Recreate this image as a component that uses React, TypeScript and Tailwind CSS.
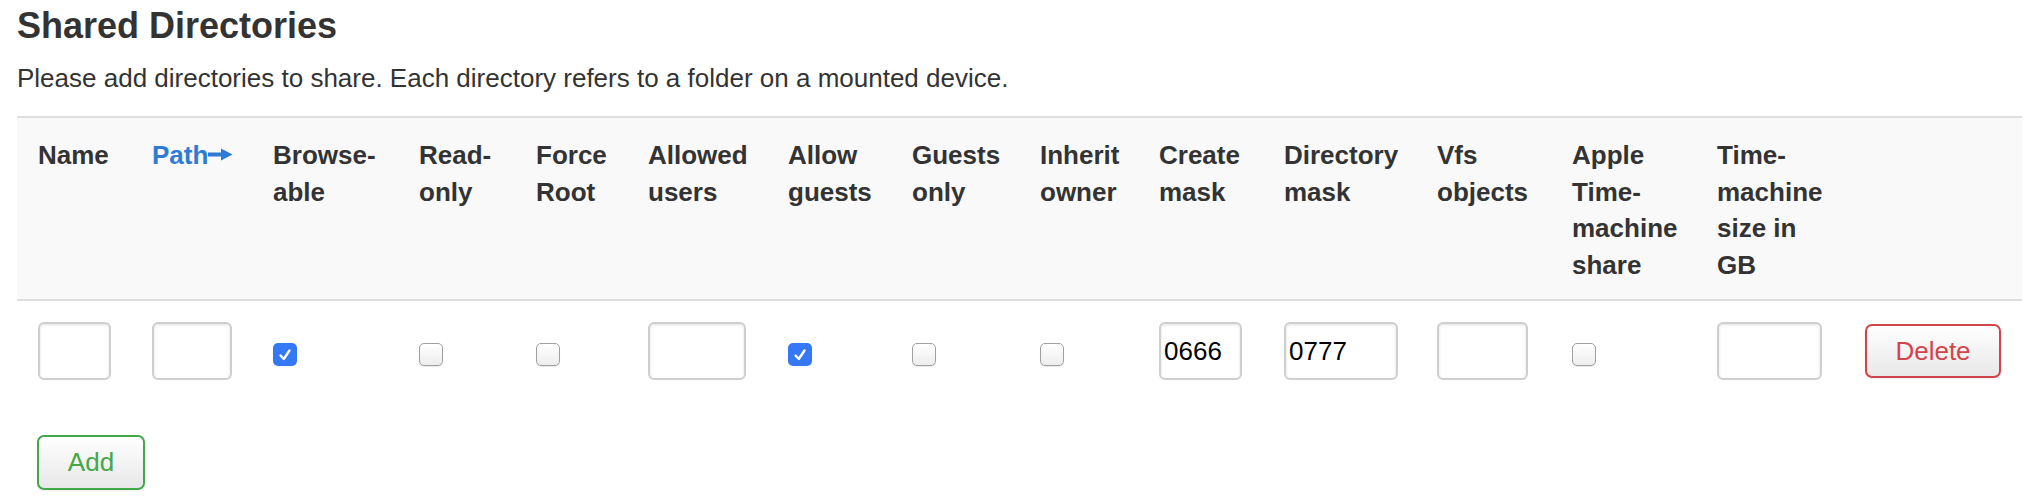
import React from "react";

const GRID =
  "grid grid-cols-[114px_121px_146px_117px_112px_140px_124px_128px_119px_125px_153px_135px_145px_148px_1fr] pl-[21px]";

function TextInput({ w, value }: { w: string; value?: string }) {
  return (
    <div
      className={`${w} h-[58px] rounded-[6px] border-2 border-[#cfcfcf] bg-white shadow-[inset_0_1px_3px_rgba(0,0,0,0.12)] flex items-center pl-[3px] text-[26px] text-black`}
    >
      {value}
    </div>
  );
}

function Check({ on }: { on?: boolean }) {
  return (
    <div className="h-[58px] flex items-center">
      {on ? (
        <span className="mt-[7px] w-[24px] h-[23px] rounded-[5px] bg-[#3478f6] flex items-center justify-center">
          <svg width="16" height="16" viewBox="0 0 16 16">
            <path d="M3.5 8.5 L6.8 12 L12.5 3.5" fill="none" stroke="white" strokeWidth="2.4" strokeLinecap="round" strokeLinejoin="round" />
          </svg>
        </span>
      ) : (
        <span className="mt-[7px] w-[24px] h-[23px] rounded-[5px] border border-[#a0a0a0] bg-gradient-to-b from-white to-[#ededed] shadow-[0_1px_1px_rgba(0,0,0,0.1)]" />
      )}
    </div>
  );
}

function Head({ lines }: { lines: string[] }) {
  return (
    <div className="whitespace-nowrap">
      {lines.map((l, i) => (
        <div key={i}>{l}</div>
      ))}
    </div>
  );
}

export default function App() {
  return (
    <div className="font-['Liberation_Sans',Arial,sans-serif] bg-white text-[#333333] pl-[17px] pr-[13px] pt-[6px] min-h-[503px]">
      <h2 className="text-[36px] leading-[40px] font-bold text-[#333333]">Shared Directories</h2>
      <p className="mt-[14px] text-[26px] leading-[36.4px] text-[#333333]">
        Please add directories to share. Each directory refers to a folder on a mounted device.
      </p>

      <div className="mt-[20px]">
        <div className={`${GRID} bg-[#f9f9f9] border-t-2 border-b-2 border-[#dedede] pt-[19px] pb-[16px] text-[26px] leading-[36.4px] font-bold items-start`}>
          <Head lines={["Name"]} />
          <div className="whitespace-nowrap text-[#2e7bd6]">
            Path
            <svg width="25" height="13" viewBox="0 0 25 13" className="inline-block align-[3px]">
              <rect x="0" y="4.5" width="15" height="4" fill="#2e7bd6" />
              <path d="M13 0.5 L24.5 6.5 L13 12.5 Z" fill="#2e7bd6" />
            </svg>
          </div>
          <Head lines={["Browse-", "able"]} />
          <Head lines={["Read-", "only"]} />
          <Head lines={["Force", "Root"]} />
          <Head lines={["Allowed", "users"]} />
          <Head lines={["Allow", "guests"]} />
          <Head lines={["Guests", "only"]} />
          <Head lines={["Inherit", "owner"]} />
          <Head lines={["Create", "mask"]} />
          <Head lines={["Directory", "mask"]} />
          <Head lines={["Vfs", "objects"]} />
          <Head lines={["Apple", "Time-", "machine", "share"]} />
          <Head lines={["Time-", "machine", "size in", "GB"]} />
          <div />
        </div>

        <div className={`${GRID} pt-[21px] pb-[22px] items-start`}>
          <TextInput w="w-[73px]" />
          <TextInput w="w-[80px]" />
          <Check on />
          <Check />
          <Check />
          <TextInput w="w-[98px]" />
          <Check on />
          <Check />
          <Check />
          <TextInput w="w-[83px]" value="0666" />
          <TextInput w="w-[114px]" value="0777" />
          <TextInput w="w-[91px]" />
          <Check />
          <TextInput w="w-[105px]" />
          <div>
            <button className="mt-[2px] w-[136px] h-[54px] rounded-[7px] border-2 border-[#d2444b] bg-gradient-to-b from-white to-[#e8e8e8] text-[26px] text-[#d2444b] shadow-[0_1px_2px_rgba(0,0,0,0.08)]">
              Delete
            </button>
          </div>
        </div>

        <div className="pl-[20px] mt-[33px]">
          <button className="w-[108px] h-[55px] rounded-[7px] border-2 border-[#43a847] bg-gradient-to-b from-white to-[#e8e8e8] text-[26px] text-[#43a847] shadow-[0_1px_2px_rgba(0,0,0,0.08)]">
            Add
          </button>
        </div>
      </div>
    </div>
  );
}
